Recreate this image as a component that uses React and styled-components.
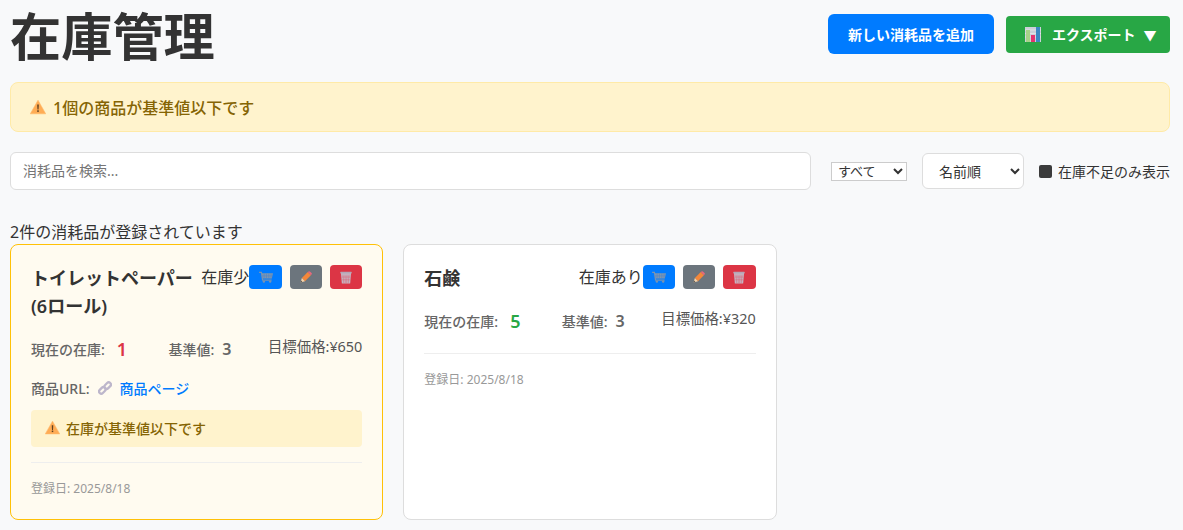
import React from 'react'
import styled, { createGlobalStyle } from 'styled-components'

const fontStack = '"Noto Sans", "Noto Sans CJK JP", sans-serif'

const GlobalStyle = createGlobalStyle`
    * { box-sizing: border-box; }
    html, body { margin: 0; background: #f8f9fa; }
    body {
        font-family: ${fontStack};
        color: #333;
        overflow: hidden;
    }
`

const items = [
    { id: 1, name: 'トイレットペーパー (6ロール)', status: '在庫少', stock: 1, min: 3, price: '¥650', url: '商品ページ', low: true, date: '2025/8/18' },
    { id: 2, name: '石鹸', status: '在庫あり', stock: 5, min: 3, price: '¥320', low: false, date: '2025/8/18' },
]

function WarnIcon({ size = 16 }) {
    return (
        <svg width={size} height={size} viewBox="0 0 16 16" aria-hidden="true">
            <path d="M8 1.2 15.7 14.8H.3Z" fill="#ffac55" stroke="#ffb868" strokeWidth="0.6" strokeLinejoin="round" />
            <path d="M7.2 5.6h1.6l-.25 5H7.45Z" fill="#5e4120" />
            <rect x="7.2" y="11.3" width="1.6" height="1.6" fill="#5e4120" />
        </svg>
    )
}

function ChartIcon() {
    return (
        <svg width="16" height="16" viewBox="0 0 16 16" aria-hidden="true">
            <rect x="0" y="1" width="16" height="15" fill="#ccd0d8" />
            <path d="M0 4H16M0 7.5H16M0 11H16" stroke="#e6e7ea" strokeWidth="0.8" />
            <rect x="1" y="4" width="4" height="12" fill="#a6d388" />
            <rect x="6" y="9" width="4" height="7" fill="#e5336f" />
            <rect x="11" y="1" width="4" height="15" fill="#3b88c3" />
        </svg>
    )
}

function CartIcon() {
    return (
        <svg width="14" height="12" viewBox="0 0 15 13" aria-hidden="true">
            <path d="M0 1.5H2.5L3.8 9.8H13.6" fill="none" stroke="#7a93b0" strokeWidth="1.3" />
            <path d="M3 2.5H15L13.8 8.2H3.8Z" fill="#8197ae" />
            <path d="M5.5 2.7V8M8 2.7V8M10.5 2.7V8M13 2.7V8M3.5 5.3H14.4" stroke="#4f86c8" strokeWidth="0.7" />
            <circle cx="5.2" cy="11.5" r="1.3" fill="#7a93b0" />
            <circle cx="12" cy="11.5" r="1.3" fill="#7a93b0" />
        </svg>
    )
}

function PencilIcon() {
    return (
        <svg width="12" height="12" viewBox="0 0 13 13" aria-hidden="true">
            <path d="M2 7.6 8.4 1.2 11.8 4.6 5.4 11Z" fill="#f4873a" />
            <path d="M8.4 1.2 9.2.5a1.1 1.1 0 0 1 1.5 0l1.8 1.8a1.1 1.1 0 0 1 0 1.5l-.7.8Z" fill="#e7687d" />
            <path d="M2 7.6 5.4 11 .6 12.4Z" fill="#f5d3ab" />
            <path d="M1.2 10.4 2.6 11.8 .6 12.4Z" fill="#55504c" />
        </svg>
    )
}

function TrashIcon() {
    return (
        <svg width="12" height="13" viewBox="0 0 13 14" aria-hidden="true">
            <path d="M1 2H12L11 13.6H2Z" fill="#c5b5c2" />
            <path d="M3.2 4 4 13M5.4 4 5.8 13M7.6 4 7.2 13M9.8 4 9 13M2 6.5 11 6.5M2.4 9.5 10.6 9.5" stroke="#dd6273" strokeWidth="0.55" />
            <rect x="0.3" y="0.8" width="12.4" height="1.8" rx="0.5" fill="#b5a5b5" />
        </svg>
    )
}

function LinkIcon() {
    return (
        <svg width="14" height="14" viewBox="0 0 14 14" aria-hidden="true">
            <g fill="none" stroke="#bdb6cb" strokeWidth="2.3">
                <rect x="0.7" y="7.2" width="7.2" height="4.4" rx="2.2" transform="rotate(-45 4.3 9.4)" />
                <rect x="6.1" y="2.4" width="7.2" height="4.4" rx="2.2" transform="rotate(-45 9.7 4.6)" />
            </g>
        </svg>
    )
}

function App() {
    return (
        <Page>
            <GlobalStyle />
            <Header>
                <Title>在庫管理</Title>
                <HeaderActions>
                    <AddButton>新しい消耗品を追加</AddButton>
                    <ExportButton>
                        <ChartIcon />
                        <span>エクスポート</span>
                        <Caret>▼</Caret>
                    </ExportButton>
                </HeaderActions>
            </Header>

            <Alert>
                <WarnIcon />
                <span>1個の商品が基準値以下です</span>
            </Alert>

            <Filters>
                <SearchInput placeholder="消耗品を検索..." />
                <PlainSelect defaultValue="all">
                    <option value="all">すべて</option>
                </PlainSelect>
                <SortSelect defaultValue="name">
                    <option value="name">名前順</option>
                </SortSelect>
                <CheckLabel>
                    <CheckBox type="checkbox" />
                    在庫不足のみ表示
                </CheckLabel>
            </Filters>

            <Count>2件の消耗品が登録されています</Count>

            <CardGrid>
                {items.map((item) => (
                    <Card key={item.id} $low={item.low}>
                        <CardHead>
                            <CardName>{item.name}</CardName>
                            <Status>{item.status}</Status>
                            <IconButtons>
                                <IconButton $bg="#007bff"><CartIcon /></IconButton>
                                <IconButton $bg="#6c757d"><PencilIcon /></IconButton>
                                <IconButton $bg="#dc3545"><TrashIcon /></IconButton>
                            </IconButtons>
                        </CardHead>
                        <Stats>
                            <Stat>
                                <StatLabel>現在の在庫:</StatLabel>
                                <StockValue $low={item.low}>{item.stock}</StockValue>
                            </Stat>
                            <Stat>
                                <StatLabel>基準値:</StatLabel>
                                <MinValue>{item.min}</MinValue>
                            </Stat>
                            <Price>目標価格:{item.price}</Price>
                        </Stats>
                        {item.url && (
                            <UrlRow>
                                <StatLabel>商品URL:</StatLabel>
                                <LinkIcon />
                                <ProductLink href="#">{item.url}</ProductLink>
                            </UrlRow>
                        )}
                        {item.low && (
                            <CardWarning>
                                <WarnIcon size={15} />
                                <span>在庫が基準値以下です</span>
                            </CardWarning>
                        )}
                        <CardFoot $low={item.low}>登録日: {item.date}</CardFoot>
                    </Card>
                ))}
            </CardGrid>
        </Page>
    )
}

const Page = styled.div`
    padding: 0 13px 10px 10px;
`

const Header = styled.div`
    display: flex;
    justify-content: space-between;
    align-items: center;
    height: 72px;
    margin-bottom: 10px;
`

const Title = styled.h1`
    margin: 0;
    font-size: 51.2px;
    font-weight: 700;
    line-height: 72px;
    color: #333;
`

const HeaderActions = styled.div`
    display: flex;
    align-items: center;
    gap: 12px;
    margin-top: -4px;
`

const AddButton = styled.button`
    height: 40px;
    width: 166px;
    padding: 0;
    border: none;
    border-radius: 6px;
    background: #007bff;
    color: #fff;
    font: 600 14px ${fontStack};
`

const ExportButton = styled.button`
    display: flex;
    align-items: center;
    gap: 11px;
    height: 37px;
    width: 164px;
    padding: 0 0 0 19px;
    border: none;
    border-radius: 4px;
    background: #28a745;
    color: #fff;
    font: 600 14px ${fontStack};
`

const Caret = styled.span`
    margin-left: -3px;
    font-size: 13px;
`

const Alert = styled.div`
    display: flex;
    align-items: center;
    gap: 7px;
    height: 50px;
    padding: 0 19px 1px;
    margin-bottom: 20px;
    background: #fff3cd;
    border: 1px solid #ffeaa7;
    border-radius: 8px;
    color: #856404;
    font-size: 16px;
    font-weight: 500;
`

const Filters = styled.div`
    display: flex;
    align-items: center;
    height: 38px;
    margin-bottom: 32px;
`

const SearchInput = styled.input`
    flex: 1;
    height: 38px;
    padding: 0 12px 2px;
    margin-right: 20px;
    background: #fff;
    border: 1px solid #ddd;
    border-radius: 6px;
    font: 14px ${fontStack};

    &::placeholder {
        color: #757575;
    }
`

const PlainSelect = styled.select`
    width: 76px;
    height: 19px;
    margin-right: 15px;
    padding: 0 0 0 2px;
    background: #fff;
    border: 1px solid #ccc;
    border-radius: 0;
    color: #333;
    font: 13px/15px "Liberation Sans", "Noto Sans CJK JP", sans-serif;
`

const SortSelect = styled.select`
    width: 102px;
    height: 36px;
    margin-right: 15px;
    padding: 0 12px;
    background: #fff;
    border: 1px solid #ddd;
    border-radius: 6px;
    color: #333;
    font: 14px ${fontStack};
`

const CheckLabel = styled.label`
    display: flex;
    align-items: center;
    gap: 6px;
    font-size: 14px;
    color: #333;
    white-space: nowrap;
`

const CheckBox = styled.input`
    appearance: none;
    display: block;
    width: 13px;
    height: 13px;
    margin: 0;
    border-radius: 2px;
    background: #3b3b3b;
`

const Count = styled.div`
    margin-bottom: 2px;
    font-size: 16px;
    line-height: 20px;
    color: #333;
`

const CardGrid = styled.div`
    display: grid;
    grid-template-columns: repeat(3, 1fr);
    gap: 20px;
`

const Card = styled.div`
    display: flex;
    flex-direction: column;
    height: 276px;
    padding: 20px;
    background: ${(p) => (p.$low ? '#fffbf0' : '#fff')};
    border: 1px solid ${(p) => (p.$low ? '#ffc107' : '#ddd')};
    border-radius: 8px;
`

const CardHead = styled.div`
    display: flex;
    align-items: flex-start;
    justify-content: space-between;
    margin-bottom: 17px;
`

const CardName = styled.h3`
    flex: 1;
    margin: -1px 0 0;
    font-size: 18px;
    font-weight: 600;
    line-height: 28px;
    color: #333;
`

const Status = styled.span`
    font-size: 16px;
    line-height: 25px;
    color: #333;
    white-space: nowrap;
`

const IconButtons = styled.div`
    display: flex;
    gap: 8px;
`

const IconButton = styled.button`
    display: flex;
    align-items: center;
    justify-content: center;
    width: 32.33px;
    height: 24px;
    padding: 0;
    border: none;
    border-radius: 4px;
    background: ${(p) => p.$bg};
`

const Stats = styled.div`
    display: flex;
    justify-content: space-between;
    align-items: flex-start;
    margin-bottom: 15px;
`

const Stat = styled.div`
    display: flex;
    align-items: center;
    gap: 6px;
    height: 24px;
`

const StatLabel = styled.span`
    font-size: 14px;
    font-weight: 500;
    color: #666;
`

const StockValue = styled.span`
    min-width: 15px;
    margin-left: 6px;
    font-size: 18px;
    font-weight: 600;
    color: ${(p) => (p.$low ? '#dc3545' : '#28a745')};
`

const MinValue = styled.span`
    margin-left: 2px;
    font-size: 16px;
    font-weight: 600;
    color: #666;
`

const Price = styled.span`
    font-size: 14.4px;
    line-height: 20px;
    color: #555;
`

const UrlRow = styled.div`
    display: flex;
    align-items: center;
    gap: 9px;
    height: 24px;
    padding-bottom: 1px;
    margin-bottom: 10px;
`

const ProductLink = styled.a`
    margin-left: -2px;
    font-size: 14px;
    font-weight: 500;
    color: #007bff;
    text-decoration: none;
`

const CardWarning = styled.div`
    display: flex;
    align-items: center;
    gap: 6px;
    height: 37px;
    padding: 0 14px 2px;
    margin-bottom: 15px;
    background: #fff3cd;
    border-radius: 4px;
    color: #856404;
    font-size: 14px;
    font-weight: 500;
`

const CardFoot = styled.div`
    margin-top: ${(p) => (p.$low ? '0' : '5px')};
    padding-top: 16px;
    border-top: 1px solid #eee;
    font-size: 12px;
    color: #999;
`

export default App
